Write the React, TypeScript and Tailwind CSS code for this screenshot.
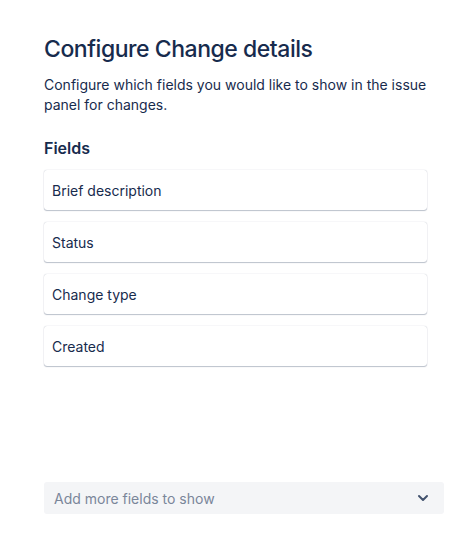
import { ChevronDown } from "lucide-react";

const FIELDS = ["Brief description", "Status", "Change type", "Created"];

export default function App() {
  return (
    <div
      className="flex h-[549px] w-[474px] flex-col bg-white pl-[44px] pr-[30px] pt-[35px] pb-[35px] text-[#172B4D]"
      style={{ fontFamily: "Inter, 'Noto Sans', sans-serif" }}
    >
      <h1 className="text-[23px] font-medium leading-[28px] tracking-[-0.02em]">
        Configure Change details
      </h1>
      <p className="mt-[12px] pr-[12px] text-[14px] leading-[20px]">
        Configure which fields you would like to show in the issue panel for changes.
      </p>
      <h2 className="mt-[23px] text-[16px] font-semibold leading-[20px]">Fields</h2>
      <div className="mt-[12px] mr-[17px] flex flex-col gap-[12px]">
        {FIELDS.map((f) => (
          <div
            key={f}
            className="flex h-[40px] items-center rounded-[3px] bg-white px-[8px] text-[14px] shadow-[0_1px_1px_rgba(9,30,66,0.25),0_0_1px_rgba(9,30,66,0.31)]"
          >
            {f}
          </div>
        ))}
      </div>
      <div className="mt-auto flex h-[32px] items-center justify-between rounded-[3px] bg-[#F4F5F7] pl-[10px] pr-[13px] text-[14px] text-[#7A869A]">
        <span>Add more fields to show</span>
        <ChevronDown className="h-[16px] w-[16px] text-[#42526E]" strokeWidth={3} />
      </div>
    </div>
  );
}
